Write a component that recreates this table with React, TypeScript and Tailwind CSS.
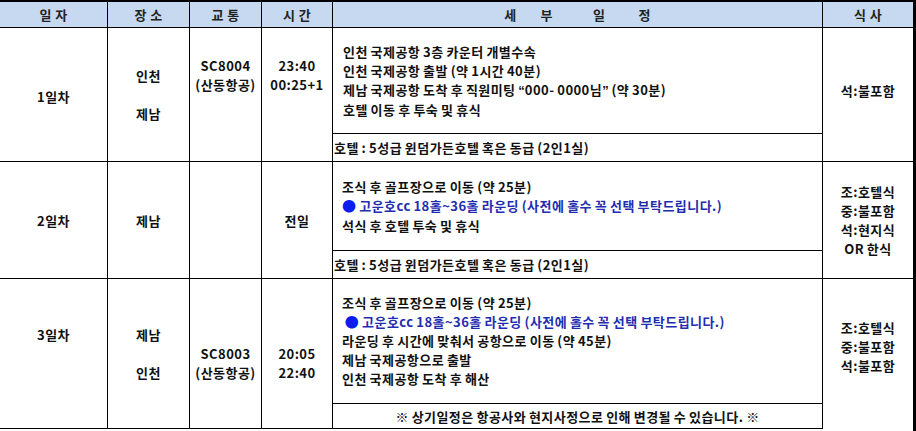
export default function App() {
  const vline = "border-r border-black";
  const q = "font-['Liberation_Sans',sans-serif] tracking-normal";
  return (
    <div className="w-[916px] h-[431px] bg-white overflow-hidden font-['Noto_Sans_CJK_KR','Noto_Sans_CJK_SC',sans-serif] text-[13px] tracking-[0.45px] [word-spacing:-0.6px] font-bold text-[#111] leading-[19px]">
      <div className="h-[431px] border-t-2 border-r-[3px] border-black flex flex-col">
        {/* header */}
        <div className="flex h-[26px] shrink-0 border-b border-black bg-[#c6d9f0] text-[#222] [word-spacing:0px]">
          <div className={`w-[108px] ${vline} flex items-center justify-center whitespace-pre`}>일 자</div>
          <div className={`w-[82px] ${vline} flex items-center justify-center whitespace-pre`}>장 소</div>
          <div className={`w-[72px] ${vline} flex items-center justify-center whitespace-pre`}>교 통</div>
          <div className={`w-[71px] ${vline} flex items-center justify-center whitespace-pre`}>시 간</div>
          <div className={`w-[490px] ${vline} flex items-center justify-center`}>
            <span>세</span>
            <span className="ml-[24px]">부</span>
            <span className="ml-[40px]">일</span>
            <span className="ml-[33px]">정</span>
          </div>
          <div className="flex-1 flex items-center justify-center whitespace-pre">식 사</div>
        </div>

        {/* day 1 */}
        <div className="flex h-[134px] shrink-0 border-b border-black">
          <div className={`w-[108px] ${vline} flex items-center justify-center pt-[3px]`}>1일차</div>
          <div className={`w-[82px] ${vline} flex flex-col items-center justify-center`}>
            <div>인천</div>
            <div>&nbsp;</div>
            <div>제남</div>
          </div>
          <div className={`w-[72px] ${vline} flex flex-col items-center pt-[28px]`}>
            <div>SC8004</div>
            <div>(산동항공)</div>
          </div>
          <div className={`w-[71px] ${vline} flex flex-col items-center pt-[28px]`}>
            <div>23:40</div>
            <div>00:25+1</div>
          </div>
          <div className={`w-[490px] ${vline} flex flex-col`}>
            <div className="h-[106px] border-b border-black flex flex-col justify-center pl-[10px]">
              <div>인천 국제공항 3층 카운터 개별수속</div>
              <div>인천 국제공항 출발 (약 1시간 40분)</div>
              <div>
                제남 국제공항 도착 후 직원미팅 <span className={q}>“</span>000- 0000님<span className={q}>”</span> (약 30분)
              </div>
              <div>호텔 이동 후 투숙 및 휴식</div>
            </div>
            <div className="flex-1 flex items-center pl-[1px]">호텔 : 5성급 윈덤가든호텔 혹은 동급 (2인1실)</div>
          </div>
          <div className="flex-1 flex items-center justify-center pb-[8px]">석:불포함</div>
        </div>

        {/* day 2 */}
        <div className="flex h-[117px] shrink-0 border-b border-black">
          <div className={`w-[108px] ${vline} flex items-center justify-center`}>2일차</div>
          <div className={`w-[82px] ${vline} flex items-center justify-center`}>제남</div>
          <div className={`w-[72px] ${vline}`}></div>
          <div className={`w-[71px] ${vline} flex items-center justify-center`}>전일</div>
          <div className={`w-[490px] ${vline} flex flex-col`}>
            <div className="h-[89px] border-b border-black flex flex-col justify-center pl-[9px] leading-[19.5px]">
              <div>조식 후 골프장으로 이동 (약 25분)</div>
              <div className="text-[#1f2db0]">
                <span className="text-[#0b1cf0] text-[14px]">●</span> 고운호cc 18홀~36홀 라운딩 (사전에 홀수 꼭 선택 부탁드립니다.)
              </div>
              <div>석식 후 호텔 투숙 및 휴식</div>
            </div>
            <div className="flex-1 flex items-center pl-[1px]">호텔 : 5성급 윈덤가든호텔 혹은 동급 (2인1실)</div>
          </div>
          <div className="flex-1 flex flex-col items-center justify-center leading-[19px]">
            <div>조:호텔식</div>
            <div>중:불포함</div>
            <div>석:현지식</div>
            <div>OR 한식</div>
          </div>
        </div>

        {/* day 3 */}
        <div className="flex flex-1">
          <div className="flex h-[150px] border-b border-black">
            <div className={`w-[108px] ${vline} flex flex-col items-center pt-[46px]`}>3일차</div>
            <div className={`w-[82px] ${vline} flex flex-col items-center pt-[46px]`}>
              <div>제남</div>
              <div>&nbsp;</div>
              <div>인천</div>
            </div>
            <div className={`w-[72px] ${vline} flex flex-col items-center pt-[65px]`}>
              <div>SC8003</div>
              <div>(산동항공)</div>
            </div>
            <div className={`w-[71px] ${vline} flex flex-col items-center pt-[65px]`}>
              <div>20:05</div>
              <div>22:40</div>
            </div>
            <div className={`w-[490px] ${vline} flex flex-col`}>
              <div className="h-[125px] border-b border-black flex flex-col justify-center pl-[9px] pb-[2px]">
                <div>조식 후 골프장으로 이동 (약 25분)</div>
                <div className="text-[#1f2db0] whitespace-pre">
                  {" "}<span className="text-[#0b1cf0] text-[14px]">●</span> 고운호cc 18홀~36홀 라운딩 (사전에 홀수 꼭 선택 부탁드립니다.)
                </div>
                <div>라운딩 후 시간에 맞춰서 공항으로 이동 (약 45분)</div>
                <div>제남 국제공항으로 출발</div>
                <div>인천 국제공항 도착 후 해산</div>
              </div>
              <div className="flex-1 flex items-center justify-center">
                ※ 상기일정은 항공사와 현지사정으로 인해 변경될 수 있습니다. ※
              </div>
            </div>
          </div>
          <div className="flex-1 flex flex-col items-center pt-[39px] leading-[19px]">
            <div>조:호텔식</div>
            <div>중:불포함</div>
            <div>석:불포함</div>
          </div>
        </div>
      </div>
    </div>
  );
}
